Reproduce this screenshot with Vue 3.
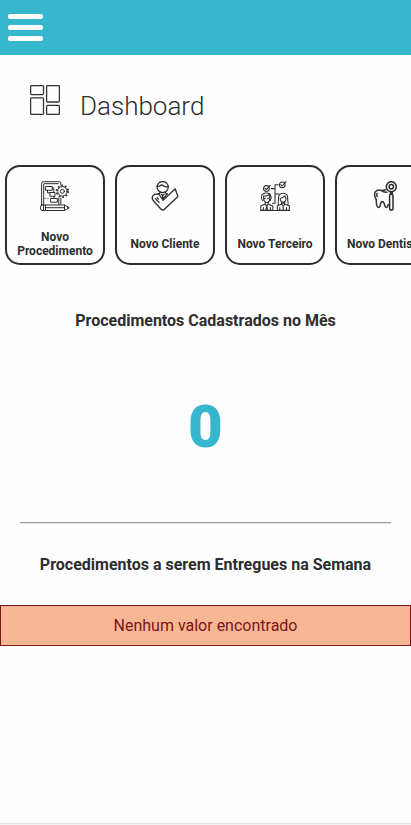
<script setup>
const actions = [
  { icon: 'procedure', label: 'Novo Procedimento' },
  { icon: 'client', label: 'Novo Cliente' },
  { icon: 'third', label: 'Novo Terceiro' },
  { icon: 'dentist', label: 'Novo Dentista' },
]
</script>

<template>
  <div class="page">
    <header class="topbar">
      <button class="menu" aria-label="Menu"><span></span><span></span><span></span></button>
    </header>
    <main>
      <div class="title">
        <svg width="30" height="30" viewBox="0 0 30 30" fill="none" stroke="#343436" stroke-width="1.3">
          <rect x=".6" y=".6" width="12.9" height="9" rx="1" />
          <rect x="16.6" y=".6" width="12.8" height="16.4" rx="1" />
          <rect x=".6" y="12.8" width="12.9" height="16.6" rx="1" />
          <rect x="16.6" y="20.4" width="12.8" height="9" rx="1" />
        </svg>
        <h1>Dashboard</h1>
      </div>
      <nav class="cards">
        <a v-for="a in actions" :key="a.icon" class="card">
          <svg width="30" height="30" viewBox="0 0 30 30" fill="none" stroke="#2d2d2f" stroke-width="1" stroke-linejoin="round" stroke-linecap="round">
            <g v-if="a.icon === 'procedure'">
              <path d="M20.8 4V2Q20.8.7 19.5.7H3.2Q1.6.7 1.6 2.5V23.8M3.7 23.5V3M20.8 17v6.5M18.8 17v6.5M4.5 2.7h14" />
              <path d="M5.8 5.5h6.5v3.8H5.8zM10.3 11.5H15v3.8h-4.7zM11 17.5h6.4v3.7H11zM7.5 9.3v2.5h2.6M12.3 7h1.5v4M14 15.3v2" />
              <path d="M5 17.3h.3M7.8 17.3h.3" />
              <circle cx="22.4" cy="10.3" r="4.7" />
              <circle cx="22.4" cy="10.3" r="5.8" stroke-width="1.8" stroke-dasharray="1.8 1.84" stroke-linecap="butt" />
              <circle cx="22.4" cy="10.3" r="2" />
              <path d="M2 24h22.5l4.8 2.7-4.8 2.8H2Q.6 29.5.6 28v-2.5Q.6 24 2 24zM3.5 24v5.5M5.5 24v5.5M24.5 24v5.5M5.5 26.7h19M27.5 26.2v1" />
            </g>
            <g v-else-if="a.icon === 'client'" stroke-width="1.3">
              <circle cx="12.7" cy="6.1" r="5.6" />
              <path d="M7.2 5.3c1.7.2 3.5-.4 4.6-1.5 1.5 1.4 3.5 2.3 6.2 2M7.4 12.8c1.8.4 2.5-.4 3-1.7M15.1 11.2c.3 1.2 1.1 1.5 2.4 1.8M8.5 12.7l4.2 6 4.3-5.8M12.7 14v4.5M11.3 13.2l1.4 1.2 1.4-1.2" />
              <path d="M7.2 13.2c-2.8-.3-5 1.3-5 4 0 1 .5 1.8 1.2 2.5l7.7 8.6q1.6 1.6 3.1.2L27.9 15.5 25.2 7.8 13 19.4" />
              <path d="M5.4 17.6l3.6 3.6M7.2 16.8l1.3 1.3" />
            </g>
            <g v-else-if="a.icon === 'third'" stroke-width="1.05">
              <circle cx="6.4" cy="7.5" r="2.9" /><circle cx="22.3" cy="3.8" r="2.9" />
              <path d="M4.9 7.2l1.4 1.5 3.9-4.3M20.8 3.5l1.4 1.5L26.1.7M11 7.6h4M18.2 3.7H15v18.6h-2.5M15 13h4" />
              <path d="M2.8 19.8c-2.1-1.6-1.7-6 .4-7 2-1.3 6.5-1.1 7.5 1.5.8 1.8.2 4.5-.5 5.5M3.6 17.5v-2.8c2.4.6 4.2 0 5.1-1l1 1.2v2.6c0 5.2-6.1 5.2-6.1 0M5.2 20.8v2.3L.8 25v4.2h12V25l-4.6-1.9v-2.3M5.2 23.1l1.5 2.3L8.2 23M6.7 25.4l-1 3.7M6.7 25.4l1 3.7M3.4 26.5v2.7M10.4 26.5v2.7" />
              <path d="M18.5 23.5c-.9-1.3.2-3 0-5.6-.3-3.7 1.6-5.6 4.6-5.6s5 1.9 4.6 5.6c-.2 2.6 1 4.2.2 5.6M20.2 17.5c2.5-.5 4-1.5 4.6-2.7.1 1.1.6 1.9 1.3 2.3 0 5.5-5.9 5.3-5.9.4M21.7 21v2.2l-4.4 1.5v4.5h12v-4.5l-4.6-1.5V21M21.7 23.2l1.5 2.1 1.5-2.1M23.2 25.3v3.9M19.8 26.5v2.7M26.5 26.5v2.7" />
              <path d="M4.6 17.5h.5M7.7 17.5h.5M22 22h2.6" stroke-width="1.3" />
              <path d="M.4 29.5h29.2" stroke-width="1.2" />
            </g>
            <g v-else stroke-width="1.5">
              <circle cx="21.3" cy="5.7" r="5" /><circle cx="21.3" cy="5.7" r="2.2" />
              <path d="M20.5 10.7v2.5M22.2 10.7v2.5M19.6 14.7q0-1.5 1.7-1.5t1.7 1.5v12.5q0 2.1-1.7 2.1t-1.7-2.1z" />
              <path d="M15.4 8.8c-1.7.2-2.7 1-4.2.6-2.9-1.2-6.7.3-6.7 4 0 2.5 1.8 3.6 1.8 6.5 0 3 .7 6.5 2.4 6.5 2.4 0 .9-6 3.6-6s1.7 6 4 6c1.1 0 1.6-1.3 1.9-2.8M11.2 9.4c1.5 1.3 3.5 2 5.6 1.8M7 12.4c-.8 1-.5 2 .2 3" />
            </g>
          </svg>
          <span class="label">{{ a.label }}</span>
        </a>
      </nav>
      <h2 class="month">Procedimentos Cadastrados no Mês</h2>
      <div class="count">0</div>
      <div class="divider"></div>
      <h2 class="week">Procedimentos a serem Entregues na Semana</h2>
      <div class="empty">Nenhum valor encontrado</div>
    </main>
    <footer></footer>
  </div>
</template>

<style>
body { background: #fefefe; }
</style>

<style scoped>
.page { display: flex; flex-direction: column; height: 825px; overflow: hidden; font-family: Roboto, sans-serif; color: #2d2d2f; }
.topbar { flex: none; height: 55px; background: #36b7cd; display: flex; align-items: center; padding-left: 8px; }
.menu { display: flex; flex-direction: column; gap: 6px; padding: 0; border: 0; background: none; }
.menu span { width: 35px; height: 5px; border-radius: 2px; background: #fff; }
main { flex: 1; }
.title { display: flex; align-items: flex-start; gap: 20px; padding: 30px 30px 0; height: 80px; }
h1 { margin: 6px 0 0; font-size: 26px; line-height: 30px; font-weight: 300; }
.cards { display: flex; gap: 10px; padding: 0 5px; overflow: hidden; }
.card { flex: none; box-sizing: border-box; width: 100px; height: 100px; border: 2px solid #2d2d2f; border-radius: 15px; display: flex; flex-direction: column; align-items: center; padding-top: 14px; }
.label { display: flex; align-items: center; justify-content: center; height: 28px; margin-top: 19px; font-size: 12px; line-height: 14px; font-weight: 700; text-align: center; }
h2 { margin: 0; font-size: 16px; line-height: 20px; font-weight: 700; text-align: center; }
.month { padding-top: 46px; }
.count { margin-top: 60px; height: 72px; font-size: 60px; line-height: 72px; font-weight: 900; color: #36b7cd; text-align: center; }
.divider { margin: 59px 20px 0; height: 0; border-top: 1px solid #9a9a9a; border-bottom: 1px solid #e4e4e4; }
.week { padding-top: 31px; }
.empty { box-sizing: border-box; height: 41px; margin-top: 30px; border: 1px solid #7b141c; background: #f8b792; color: #7b141c; font-size: 16px; line-height: 39px; text-align: center; }
footer { flex: none; height: 1px; border-top: 1px solid #dfdfdf; background: #f2f2f2; }
</style>
